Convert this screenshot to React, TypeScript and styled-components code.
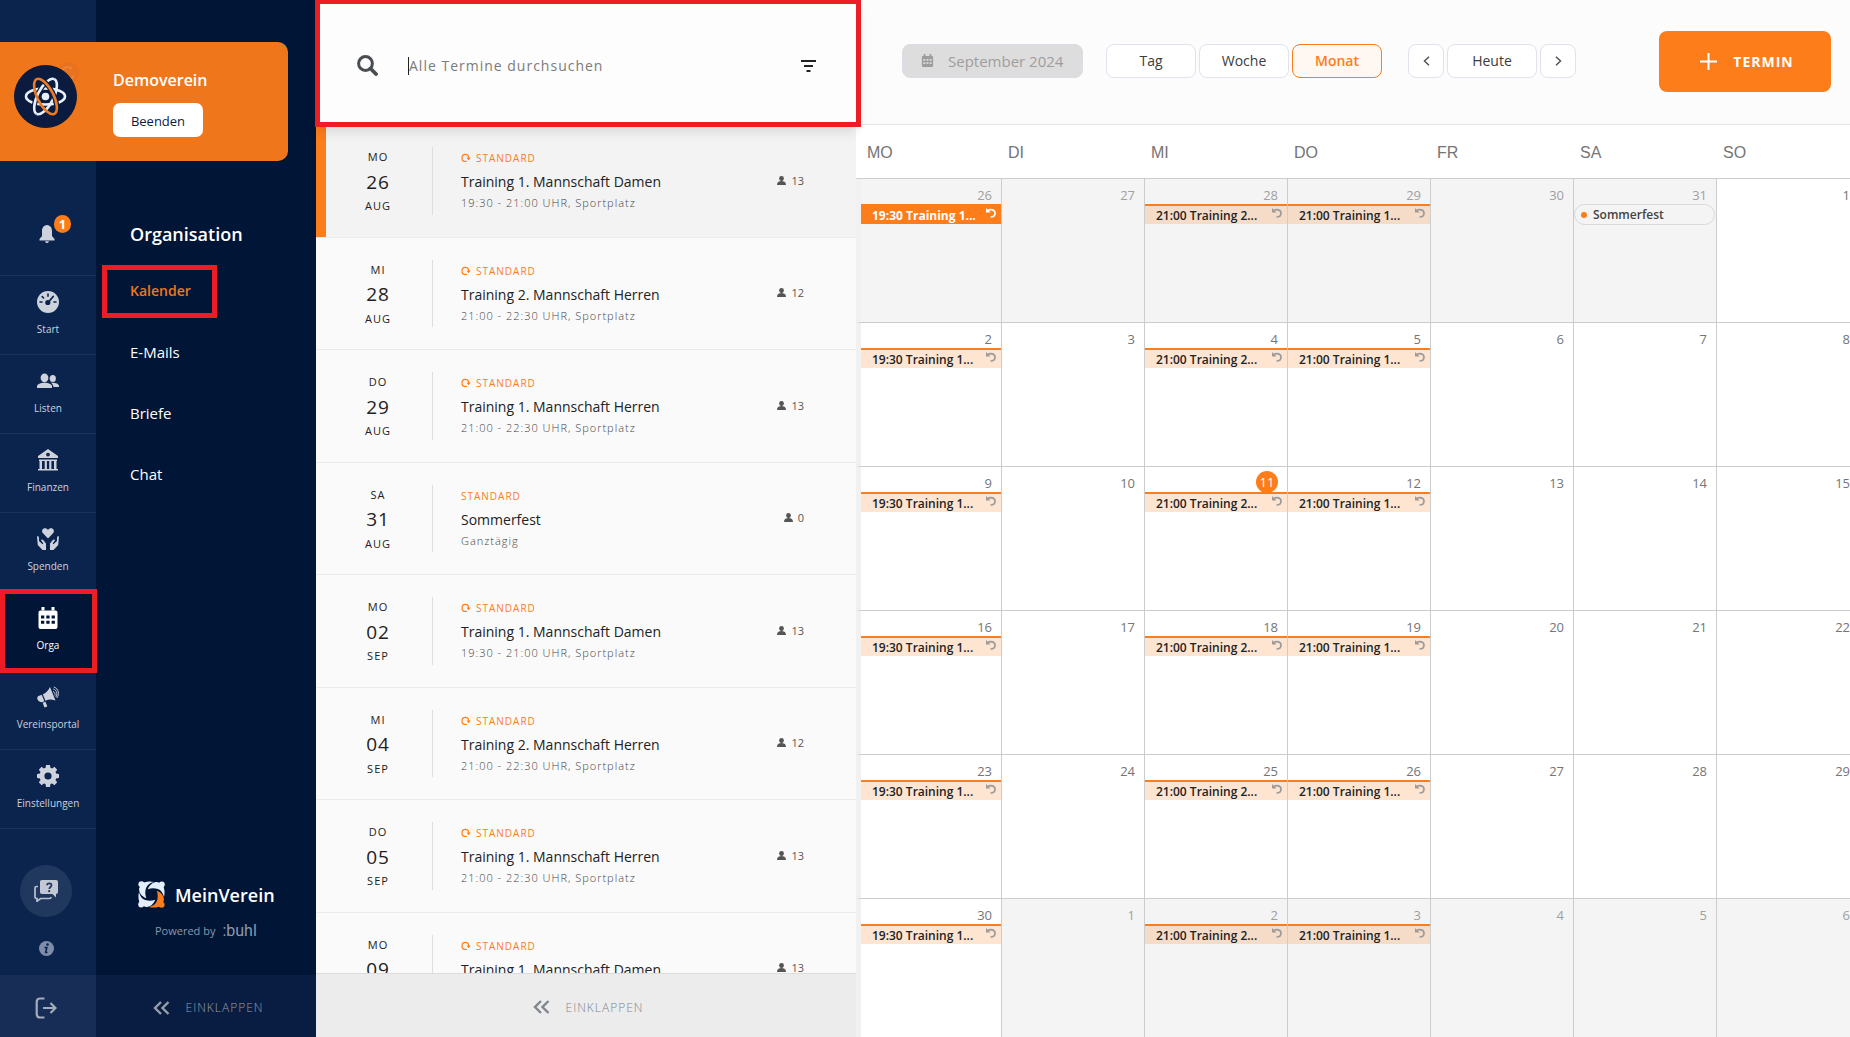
import React, { useState } from "react";
import styled, { createGlobalStyle, css } from "styled-components";

const color = {
  rail: "#0b244e",
  railLine: "#1a3259",
  nav: "#011536",
  orange: "#fc7d1a",
  banner: "#f0761c",
  red: "#ee1c25",
  line: "#cccccc",
  icon: "#cdd2dc",
};

const GlobalStyle = createGlobalStyle`
  *, *::before, *::after { box-sizing: border-box; }
  body {
    margin: 0;
    overflow: hidden;
    font-family: "Open Sans", "Noto Sans", sans-serif;
    color: #222;
    background: #fff;
  }
  button, input { font-family: inherit; }
  button { cursor: pointer; padding: 0; border: 0; background: none; }
  a { text-decoration: none; color: inherit; }
  svg { display: block; flex: none; }
`;

const App = styled.div`
  display: flex;
  height: 100vh;
  overflow: hidden;
`;

const Highlight = styled.span<{ $inset: string }>`
  position: absolute;
  inset: ${(p) => p.$inset};
  border: 5px solid ${color.red};
  pointer-events: none;
  z-index: 5;
`;

/* ---------- sidebar ---------- */

const Sidebar = styled.aside`
  position: relative;
  display: flex;
  flex: none;
`;

const Banner = styled.div`
  position: absolute;
  top: 42px;
  left: 0;
  width: 288px;
  height: 119px;
  display: flex;
  align-items: flex-start;
  gap: 36px;
  padding: 23px 0 0 14px;
  border-radius: 0 10px 10px 0;
  background: ${color.banner};
`;

const BannerText = styled.div`
  display: flex;
  flex-direction: column;
  align-items: flex-start;
  gap: 12px;
  padding-top: 4px;
`;

const ClubName = styled.strong`
  color: #fff;
  font-size: 16px;
  font-weight: 600;
  line-height: 22px;
`;

const EndButton = styled.button`
  width: 90px;
  height: 34px;
  padding-top: 2px;
  border-radius: 7px;
  background: #fff;
  color: #0b1c40;
  font-size: 13px;
`;

const Rail = styled.nav`
  display: flex;
  flex-direction: column;
  width: 96px;
  padding-top: 197px;
  background: ${color.rail};
`;

const Bell = styled.button`
  display: flex;
  flex: none;
  justify-content: center;
  height: 79px;
  padding-top: 28px;
  border-bottom: 1px solid ${color.railLine};
  color: ${color.icon};
`;

const BellIcon = styled.span`
  position: relative;
  height: 18px;
  padding-right: 2px;
`;

const Badge = styled.span`
  position: absolute;
  top: -10px;
  left: 15px;
  width: 17px;
  height: 18px;
  border-radius: 9px;
  background: ${color.orange};
  color: #fff;
  font-size: 13px;
  font-weight: 700;
  line-height: 18px;
  text-align: center;
`;

const RailItem = styled.a<{ $active?: boolean }>`
  position: relative;
  display: flex;
  flex: none;
  flex-direction: column;
  align-items: center;
  gap: 8px;
  height: 79px;
  padding-top: 15px;
  border-bottom: 1px solid ${color.railLine};
  color: ${color.icon};
  font-size: 10px;
  line-height: 16px;
  ${(p) =>
    p.$active &&
    css`
      background: ${color.nav};
      color: #fff;
    `}
`;

const RailFooter = styled.div`
  display: flex;
  flex-direction: column;
  align-items: center;
  gap: 24px;
  margin-top: auto;
  padding: 0 4px 19px 0;
`;

const HelpButton = styled.button`
  display: grid;
  place-items: center;
  width: 52px;
  height: 52px;
  border-radius: 50%;
  background: #20375e;
`;

const LogoutButton = styled.button`
  display: grid;
  place-items: center;
  height: 62px;
  padding: 4px 4px 0 0;
  background: #172d56;
  color: #a3acbc;
`;

const SubNav = styled.nav`
  display: flex;
  flex-direction: column;
  width: 220px;
  padding-top: 222px;
  background: ${color.nav};
`;

const NavHeading = styled.h2`
  margin: 0 0 15px;
  padding-left: 34px;
  color: #fff;
  font-size: 18px;
  font-weight: 600;
  line-height: 24px;
`;

const NavLink = styled.a<{ $active?: boolean }>`
  position: relative;
  display: flex;
  align-items: center;
  height: 61px;
  padding: 0 0 2px 34px;
  color: ${(p) => (p.$active ? color.banner : "#fff")};
  font-size: ${(p) => (p.$active ? 14 : 15)}px;
  font-weight: ${(p) => (p.$active ? 600 : 400)};
`;

const Brand = styled.div`
  display: flex;
  flex-direction: column;
  gap: 12px;
  margin-top: auto;
  padding: 0 0 33px 42px;
`;

const BrandName = styled.div`
  display: flex;
  align-items: center;
  gap: 10px;
  color: #fff;
  font-size: 18px;
  font-weight: 600;
  line-height: 26px;
`;

const PoweredBy = styled.div`
  display: flex;
  align-items: center;
  gap: 7px;
  padding-left: 17px;
  color: #8c98ac;
  font-size: 11px;
  line-height: 22px;
`;

const Buhl = styled.span`
  font-family: Roboto, sans-serif;
  font-size: 16px;
`;

const CollapseButton = styled.button<{ $light?: boolean }>`
  display: flex;
  flex: none;
  align-items: center;
  justify-content: center;
  gap: 16px;
  width: 100%;
  height: ${(p) => (p.$light ? 64 : 62)}px;
  padding: 3px 0 0 4px;
  border-top: ${(p) => (p.$light ? "1px solid #dcdcdc" : "0")};
  background: ${(p) => (p.$light ? "#ececec" : "#091d43")};
  color: ${(p) => (p.$light ? "#80868f" : "#989ea7")};
  font-size: 12px;
  font-weight: 300;
  letter-spacing: 1px;
`;

/* ---------- list of dates ---------- */

const ListPanel = styled.section`
  position: relative;
  z-index: 2;
  display: flex;
  flex: none;
  flex-direction: column;
  width: 540px;
  background: #fafafa;
`;

const SearchBar = styled.form`
  position: relative;
  z-index: 2;
  display: flex;
  flex: none;
  align-items: center;
  height: 125px;
  padding: 6px 40px 0 41px;
  background: #fdfdfd;
  box-shadow: 0 6px 12px rgba(0, 0, 0, 0.12);
  color: #4a4d52;
`;

const SearchInput = styled.input`
  flex: 1;
  min-width: 0;
  height: 18px;
  margin-left: 30px;
  padding: 0;
  border: 0;
  border-left: 1px solid #222;
  outline: 0;
  background: transparent;
  color: #222;
  font-size: 14px;
  letter-spacing: 1px;
  &::placeholder {
    color: #7b7b7b;
    opacity: 1;
  }
`;

const FilterButton = styled.button`
  color: #222;
`;

const List = styled.ul`
  flex: 1;
  min-height: 0;
  margin: 0;
  padding: 0;
  overflow: hidden;
  list-style: none;
`;

const ListRow = styled.li<{ $selected?: boolean }>`
  display: flex;
  padding: 22px 52px 22px 10px;
  border-bottom: 1px solid #ebebeb;
  ${(p) =>
    p.$selected &&
    css`
      background: #f3f3f3;
      box-shadow: inset 10px 0 ${color.orange};
    `}
`;

const DateBlock = styled.time`
  display: flex;
  flex: none;
  flex-direction: column;
  align-items: center;
  width: 107px;
  padding: 2px 2px 0 0;
  border-right: 1px solid #dedede;
  font-size: 11px;
  line-height: 1.5;
  letter-spacing: 1px;
`;

const DayNumber = styled.span`
  margin: 2px 0;
  font-size: 19px;
`;

const RowBody = styled.div`
  flex: 1;
  padding-left: 28px;
`;

const Category = styled.div`
  display: flex;
  align-items: center;
  gap: 5px;
  padding-top: 3px;
  color: ${color.orange};
  font-size: 10px;
  line-height: 16px;
  letter-spacing: 1px;
`;

const RowTitle = styled.div`
  margin-top: 4px;
  font-size: 14px;
  line-height: 24px;
`;

const RowTime = styled.div`
  color: #444;
  font-size: 11px;
  font-weight: 300;
  line-height: 18px;
  letter-spacing: 1px;
`;

const People = styled.div`
  display: flex;
  align-items: center;
  gap: 5px;
  height: 18px;
  margin-top: 24px;
  color: #555;
  font-size: 11px;
`;

/* ---------- calendar ---------- */

const Main = styled.main`
  flex: 1;
  min-width: 0;
  overflow: hidden;
`;

const Toolbar = styled.header`
  display: flex;
  align-items: center;
  height: 125px;
  padding: 0 19px 2px 46px;
  border-bottom: 1px solid #e4e4e4;
  background: #fcfcfc;
`;

const ButtonGroup = styled.div`
  display: flex;
  gap: 3px;
  margin-left: 23px;
  & + & {
    margin-left: 26px;
  }
`;

const ToolButton = styled.button<{ $active?: boolean; $narrow?: boolean }>`
  display: grid;
  place-items: center;
  width: ${(p) => (p.$narrow ? 36 : 90)}px;
  height: 34px;
  padding-bottom: 1px;
  border: 1px solid ${(p) => (p.$active ? color.orange : "#e2e2ee")};
  border-radius: 8px;
  background: ${(p) => (p.$active ? "#fff7f1" : "#fff")};
  color: ${(p) => (p.$active ? color.orange : "#3c3c3c")};
  font-size: 14px;
  font-weight: ${(p) => (p.$active ? 600 : 400)};
`;

const MonthButton = styled.button`
  display: flex;
  align-items: center;
  gap: 14px;
  width: 181px;
  height: 34px;
  padding: 0 0 1px 18px;
  border: 1px solid #dcdde6;
  border-radius: 8px;
  background: #dddddd;
  color: #9d9d9d;
  font-size: 15px;
  white-space: nowrap;
`;

const NewButton = styled.button`
  display: flex;
  align-items: center;
  justify-content: center;
  gap: 16px;
  width: 172px;
  height: 61px;
  margin-left: auto;
  padding-left: 4px;
  border-radius: 8px;
  background: ${color.orange};
  color: #fff;
  font-size: 14px;
  font-weight: 700;
  letter-spacing: 1px;
`;

const Calendar = styled.table`
  width: calc(100% + 10px);
  table-layout: fixed;
  border-collapse: separate;
  border-spacing: 0;
`;

const Weekday = styled.th`
  height: 54px;
  padding: 2px 0 0 6px;
  border-bottom: 1px solid ${color.line};
  color: #757575;
  font-family: "Liberation Sans", Arial, sans-serif;
  font-size: 16px;
  font-weight: 400;
  text-align: left;
  &:first-child {
    width: 146px;
    padding-left: 11px;
  }
`;

const Day = styled.td<{ $outside?: boolean }>`
  height: 144px;
  padding: 0;
  border-right: 1px solid ${color.line};
  border-bottom: 1px solid ${color.line};
  background: ${(p) => (p.$outside ? "#f4f4f4" : "#fff")};
  color: ${(p) => (p.$outside ? "#a0a0a0" : "#757575")};
  vertical-align: top;
  &:first-child {
    border-left: 5px solid #f1f1f1;
  }
`;

const DayHead = styled.div`
  display: flex;
  justify-content: flex-end;
  height: 25px;
  padding: 4px 9px 0 0;
  font-size: 13px;
  line-height: 24px;
`;

const Today = styled.span`
  width: 22px;
  height: 22px;
  border-radius: 50%;
  background: ${color.orange};
  color: #fff;
  line-height: 23px;
  text-align: center;
`;

const Event = styled.button<{ $selected?: boolean }>`
  display: flex;
  align-items: flex-start;
  justify-content: space-between;
  width: 100%;
  height: 20px;
  padding: 1px 5px 0 11px;
  border-top: 2px solid ${color.orange};
  background: ${(p) => (p.$selected ? color.orange : "rgba(250, 125, 30, 0.2)")};
  color: ${(p) => (p.$selected ? "#fff" : "#222")};
  font-size: 12px;
  font-weight: ${(p) => (p.$selected ? 700 : 600)};
  line-height: 17px;
  white-space: nowrap;
  svg {
    margin-top: 1px;
    color: ${(p) => (p.$selected ? "#fff" : "#9b9b9b")};
  }
`;

const AllDay = styled.button`
  display: flex;
  align-items: center;
  gap: 6px;
  width: calc(100% - 1px);
  height: 21px;
  padding-left: 6px;
  border: 1px solid #d8d8d8;
  border-radius: 11px;
  color: #444;
  font-size: 12px;
  font-weight: 600;
`;

const Dot = styled.span`
  width: 6px;
  height: 6px;
  border-radius: 50%;
  background: ${color.orange};
`;

/* ---------- icons ---------- */

const AtomLogo = () => (
  <svg width="63" height="63" viewBox="0 0 63 63" fill="none" strokeWidth="2.6" overflow="visible">
    <circle cx="54" cy="8" r="11" fill="#e8721d" />
    <path d="M48 6a6 6 0 0110-2M60 10a6 6 0 01-10 2" stroke="#ee8238" strokeWidth="2" />
    <circle cx="31.5" cy="31.5" r="31" fill="#0b1b3f" stroke="#111a2c" strokeWidth="1" />
    <ellipse cx="31.5" cy="31.5" rx="19.8" ry="8" stroke="#0b1b3f" strokeWidth="5" />
    <ellipse cx="31.5" cy="31.5" rx="19.5" ry="8" stroke="#e6f0fc" transform="rotate(117 31.5 31.5)" />
    <path d="M12 31.500c0-4.500 8.500-8 19.500-8s19.500 3.500 19.500 8-8.500 8-19.500 8-19.500-3.500-19.500-8z" stroke="#e6f0fc" />
    <path d="M40.300 14.100A19.500 8 117 0 0 22.700 48.900" stroke="#0b1b3f" strokeWidth="5" />
    <path d="M40.300 14.100A19.500 8 117 0 0 22.700 48.900" stroke="#e6f0fc" />
    <g transform="rotate(63 31.5 31.5)">
      <path d="M12 31.500a19.500 8 0 0 1 39 0" stroke="#0b1b3f" strokeWidth="5" />
      <ellipse cx="31.500" cy="31.500" rx="19.500" ry="8" stroke="#ee7a22" />
    </g>
    <circle cx="31.500" cy="31.500" r="3.800" fill="#e6f0fc" />
  </svg>
);

const BellGlyph = () => (
  <svg width="16" height="18" viewBox="0 0 16 18" fill="currentColor">
    <path d="M8 0C4.500.500 3 3 3 6v5L.500 14v1.500h15V14L13 11V6C13 3 11.500.500 8 0zM6 16.200h4C9.700 17.400 9 18 8 18s-1.700-.600-2-1.800z" />
  </svg>
);

const GaugeGlyph = () => (
  <svg width="22" height="22" viewBox="0 0 22 22">
    <circle cx="11" cy="11" r="11" fill="currentColor" />
    <g stroke={color.rail} strokeWidth="1.600" strokeLinecap="round">
      <path d="M11 3v2.200M5.200 5.600l1.400 1.400M3 11h2M17 11h2" />
      <path d="M11 11.500l5.200-6" strokeWidth="1.800" />
    </g>
    <circle cx="10.800" cy="11.500" r="2.600" fill={color.rail} />
  </svg>
);

const PeopleGlyph = () => (
  <svg width="22" height="22" viewBox="0 0 22 22" fill="currentColor">
    <ellipse cx="7.500" cy="7.800" rx="3.900" ry="4.400" />
    <path d="M0 18v-1.500c0-2.500 4-3.700 7.500-3.700s7.500 1.200 7.500 3.700V18z" />
    <ellipse cx="15.800" cy="8.600" rx="3.100" ry="3.500" />
    <path d="M13.800 12.800c3.600-.500 8.200.700 8.200 3.200v1h-5.500c-.200-1.800-1.200-3.200-2.700-4.200z" />
  </svg>
);

const BankGlyph = () => (
  <svg width="22" height="22" viewBox="0 0 22 22" fill="currentColor">
    <path fillRule="evenodd" d="M11 0l10 7v2H1V7zm0 3.700a1.900 1.900 0 100 3.800 1.900 1.900 0 000-3.800z" />
    <path d="M2 10.500h18V12H2zM2.500 12H5v8H2.500zM7.700 12h2.200v8H7.700zM12.200 12h2.200v8h-2.200zM17 12h2.500v8H17zM1 20h20v1.500H1z" />
  </svg>
);

const DonateGlyph = () => (
  <svg width="22" height="22" viewBox="0 0 22 22" fill="currentColor">
    <path d="M11 10.500L6 5.300C4 3 5.500.200 8 .200c1.300 0 2.300.600 3 1.700.700-1.100 1.700-1.700 3-1.700 2.500 0 4 2.800 2 5.100z" />
    <path d="M0 8.500c1-.500 2 0 2 1.500v3l3.500 3.300.8-.8-2.400-3.400c1-1 2-.5 2.700.4L9 15.500V22H5.500L.800 17z" />
    <path d="M22 8.500c-1-.500-2 0-2 1.500v3l-3.500 3.300-.8-.8 2.400-3.400c-1-1-2-.5-2.700.4L13 15.500V22h3.500l4.700-5z" />
  </svg>
);

const CalendarGlyph = ({ size = 22 }: { size?: number }) => (
  <svg width={size} height={size} viewBox="0 0 22 22" fill="currentColor">
    <path d="M4.500 0h3v3.500h-3zM14.500 0h3v3.500h-3z" />
    <path
      fillRule="evenodd"
      d="M3.500 3.500h15c1.200 0 2 .7 2 2v14.500c0 1.200-.8 2-2 2h-15c-1.200 0-2-.8-2-2V5.500c0-1.300.8-2 2-2zM4 8.500v3h3.300v-3zm5.300 0v3h3.300v-3zm5.300 0v3h3.300v-3zM4 13.800v3h3.300v-3zm5.300 0v3h3.300v-3zm5.300 0v3h3.300v-3z"
    />
  </svg>
);

const MegaphoneGlyph = () => (
  <svg width="22" height="22" viewBox="0 0 22 22" fill="currentColor">
    <path d="M13 1l5.500 13.500c-4-1.300-7-1.200-10 .200L5.800 8.300C9 7 11.300 4.800 13 1zM4.700 8.800l2.700 6.400-2.700 1C1 16-.700 12.500.700 10.700c.800-.900 2.300-1.200 4-1.900zM5.700 16.700l2.700-1 1.900 4.500c-.8.800-1.900 1.200-3 1z" />
    <path d="M16 5.500c2 .8 2.500 2.500 1.900 4M16.300 3c3.500 1 4.300 5 2.500 8M16.800 1c5 1.500 5.800 7.500 3 11" fill="none" stroke="currentColor" strokeWidth="1" />
  </svg>
);

const GearGlyph = () => (
  <svg width="22" height="22" viewBox="0 0 22 22" fill="currentColor">
    {[0, 45, 90, 135].map((a) => (
      <path key={a} d="M8.500 3.500L9 0h4l.5 3.500v15L13 22H9l-.5-3.500z" transform={`rotate(${a} 11 11)`} />
    ))}
    <circle cx="11" cy="11" r="8.500" />
    <circle cx="11" cy="11" r="3.600" fill={color.rail} />
  </svg>
);

const HelpGlyph = () => (
  <svg width="24" height="22" viewBox="0 0 24 22">
    <path d="M4 6.500H2.500c-1 0-1.500.6-1.500 1.500v9c0 1 .5 1.500 1.500 1.500H3v2.800l3.500-2.800h9c1 0 1.500-.5 1.500-1.500" fill="none" stroke="#b9c1ce" strokeWidth="1.700" />
    <path d="M8 0h14c1.300 0 2 .7 2 2v10c0 1.300-.7 2-2 2v3.500L18.500 14H8c-1.300 0-2-.7-2-2V2c0-1.300.7-2 2-2z" fill="#c2c8d4" />
    <path d="M13 5.300c0-2.700 4.500-2.700 4.500 0 0 1.700-2.200 1.700-2.200 3.700" fill="none" stroke="#20375e" strokeWidth="1.700" />
    <circle cx="15.200" cy="11.200" r="1.100" fill="#20375e" />
  </svg>
);

const InfoGlyph = () => (
  <svg width="15" height="15" viewBox="0 0 15 15">
    <circle cx="7.500" cy="7.500" r="7.500" fill="#7e8da8" />
    <circle cx="8.500" cy="3.500" r="1.300" fill={color.rail} />
    <path d="M5.500 6.500h2.300L6.700 11.500h1.800" fill="none" stroke={color.rail} strokeWidth="1.600" />
  </svg>
);

const LogoutGlyph = () => (
  <svg width="22" height="22" viewBox="0 0 22 22" fill="none" stroke="currentColor" strokeWidth="2.200">
    <path d="M9.500 1.500H5C3 1.500 1.700 2.700 1.700 5v12c0 2.300 1.300 3.500 3.300 3.500h4.500M8 11h12M15.500 6l5 5-5 5" />
  </svg>
);

const DoubleChevron = () => (
  <svg width="17" height="14" viewBox="0 0 17 14" fill="none" stroke="currentColor" strokeWidth="2.400">
    <path d="M8 1L2 7l6 6M15.500 1l-6 6 6 6" />
  </svg>
);

const BrandGlyph = () => (
  <svg width="27" height="27" viewBox="0 0 26 26">
    {[90, 180, 270, 0].map((a) => (
      <g key={a} transform={`rotate(${a} 13 13)`} fill={a === 0 ? color.orange : "#e4effd"}>
        <path d="M18 9.500C22.500 11 25 14.500 25 18.500l-2 4.500c-3 2.500-8 3.200-12.500 2 4-.8 6.800-2.800 7.800-6 1-3.200.9-6.500-.3-9.500z" />
        <circle cx="22.700" cy="22.900" r="2.900" />
      </g>
    ))}
  </svg>
);

const SearchGlyph = () => (
  <svg width="21" height="21" viewBox="0 0 21 21" fill="none" stroke="currentColor" role="img" aria-label="Suche">
    <circle cx="8.500" cy="8.500" r="6.900" strokeWidth="3" />
    <path d="M13.500 13.500l5.500 5.500" strokeWidth="3.800" strokeLinecap="round" />
  </svg>
);

const FilterGlyph = () => (
  <svg width="15" height="14" viewBox="0 0 15 14" stroke="currentColor" strokeWidth="2">
    <path d="M0 2h15M3 7h9M5.500 12h4" />
  </svg>
);

const RepeatGlyph = () => (
  <svg width="10" height="10" viewBox="0 0 10 10">
    <path d="M5.800 8.300H3.700C2 8.300 1 7 1 5 1 2.800 2.200 1.300 4.300 1.300c2 0 3.300 1.200 3.300 3.400" fill="none" stroke="currentColor" strokeWidth="1.200" />
    <path d="M5.500 4.500h4.300L7.600 7.200z" fill="currentColor" />
  </svg>
);

const UndoGlyph = () => (
  <svg width="10" height="10" viewBox="0 0 10 10">
    <path d="M2 2.300C4 1.300 9 1.200 9 5.200c0 2.500-2 3.800-4.500 3.800" fill="none" stroke="currentColor" strokeWidth="1.700" />
    <path d="M0 0v4.600h4.600z" fill="currentColor" />
  </svg>
);

const PersonGlyph = () => (
  <svg width="9" height="9" viewBox="0 0 9 9" fill="currentColor">
    <circle cx="4.500" cy="2.400" r="2.400" />
    <path d="M3.500 4h2v1.200C7.800 5.500 9 6.500 9 9H0c0-2.500 1.200-3.500 3.500-3.800z" />
  </svg>
);

const Chevron = ({ right }: { right?: boolean }) => (
  <svg width="7" height="10" viewBox="0 0 7 10" fill="none" stroke="#555" strokeWidth="1.500">
    <path d={right ? "M1 .8L5.500 5 1 9.200" : "M6 .8L1.500 5 6 9.200"} />
  </svg>
);

const PlusGlyph = () => (
  <svg width="17" height="17" viewBox="0 0 17 17" stroke="#fff" strokeWidth="2">
    <path d="M8.500 0v17M0 8.500h17" />
  </svg>
);

/* ---------- data ---------- */

const railItems = [
  { label: "Start", Icon: GaugeGlyph },
  { label: "Listen", Icon: PeopleGlyph },
  { label: "Finanzen", Icon: BankGlyph },
  { label: "Spenden", Icon: DonateGlyph },
  { label: "Orga", Icon: CalendarGlyph, active: true },
  { label: "Vereinsportal", Icon: MegaphoneGlyph },
  { label: "Einstellungen", Icon: GearGlyph },
];

const navLinks = ["Kalender", "E-Mails", "Briefe", "Chat"];

type Kind = "damen" | "herren1" | "herren2" | "fest";

const kinds: Record<Kind, { title: string; time: string; people: number }> = {
  damen: { title: "Training 1. Mannschaft Damen", time: "19:30 - 21:00 UHR, Sportplatz", people: 13 },
  herren1: { title: "Training 1. Mannschaft Herren", time: "21:00 - 22:30 UHR, Sportplatz", people: 13 },
  herren2: { title: "Training 2. Mannschaft Herren", time: "21:00 - 22:30 UHR, Sportplatz", people: 12 },
  fest: { title: "Sommerfest", time: "Ganztägig", people: 0 },
};

const rows: [string, string, string, Kind][] = [
  ["MO", "26", "AUG", "damen"],
  ["MI", "28", "AUG", "herren2"],
  ["DO", "29", "AUG", "herren1"],
  ["SA", "31", "AUG", "fest"],
  ["MO", "02", "SEP", "damen"],
  ["MI", "04", "SEP", "herren2"],
  ["DO", "05", "SEP", "herren1"],
  ["MO", "09", "SEP", "damen"],
];

const weekdays = ["MO", "DI", "MI", "DO", "FR", "SA", "SO"];

const weeklyEvents: Record<number, string> = {
  0: "19:30 Training 1...",
  2: "21:00 Training 2...",
  3: "21:00 Training 1...",
};

const weeks = Array.from({ length: 6 }, (_, w) =>
  Array.from({ length: 7 }, (_, d) => {
    const n = w * 7 + d - 5;
    return { day: n < 1 ? n + 31 : n > 30 ? n - 30 : n, outside: n < 1 || n > 30, today: n === 11 };
  })
);

export default function MeinVerein() {
  const [query, setQuery] = useState("");
  return (
    <App>
      <GlobalStyle />
      <Sidebar>
        <Rail aria-label="Hauptmenü">
          <Bell aria-label="Benachrichtigungen">
            <BellIcon>
              <BellGlyph />
              <Badge>1</Badge>
            </BellIcon>
          </Bell>
          {railItems.map(({ label, Icon, active }) => (
            <RailItem key={label} href="#" $active={active}>
              <Icon />
              {label}
              {active && <Highlight $inset="-3px -1px -3px 0" />}
            </RailItem>
          ))}
          <RailFooter>
            <HelpButton aria-label="Hilfe">
              <HelpGlyph />
            </HelpButton>
            <button aria-label="Info">
              <InfoGlyph />
            </button>
          </RailFooter>
          <LogoutButton aria-label="Abmelden">
            <LogoutGlyph />
          </LogoutButton>
        </Rail>
        <SubNav aria-label="Organisation">
          <NavHeading>Organisation</NavHeading>
          {navLinks.map((label, i) => (
            <NavLink key={label} href="#" $active={i === 0}>
              {label}
              {i === 0 && <Highlight $inset="4px 99px 4px 6px" />}
            </NavLink>
          ))}
          <Brand>
            <BrandName>
              <BrandGlyph />
              MeinVerein
            </BrandName>
            <PoweredBy>
              Powered by <Buhl>:buhl</Buhl>
            </PoweredBy>
          </Brand>
          <CollapseButton>
            <DoubleChevron />
            EINKLAPPEN
          </CollapseButton>
        </SubNav>
        <Banner>
          <AtomLogo />
          <BannerText>
            <ClubName>Demoverein</ClubName>
            <EndButton>Beenden</EndButton>
          </BannerText>
        </Banner>
      </Sidebar>

      <ListPanel>
        <SearchBar onSubmit={(e) => e.preventDefault()}>
          <label htmlFor="search">
            <SearchGlyph />
          </label>
          <SearchInput
            id="search"
            placeholder="Alle Termine durchsuchen"
            value={query}
            onChange={(e) => setQuery(e.target.value)}
          />
          <FilterButton type="button" aria-label="Filter">
            <FilterGlyph />
          </FilterButton>
          <Highlight $inset="-1px -5px -2px -1px" />
        </SearchBar>
        <List>
          {rows.map(([weekday, day, month, kind], i) => (
            <ListRow key={month + day} $selected={i === 0}>
              <DateBlock>
                {weekday}
                <DayNumber>{day}</DayNumber>
                {month}
              </DateBlock>
              <RowBody>
                <Category>
                  {kind !== "fest" && <RepeatGlyph />}
                  STANDARD
                </Category>
                <RowTitle>{kinds[kind].title}</RowTitle>
                <RowTime>{kinds[kind].time}</RowTime>
              </RowBody>
              <People>
                <PersonGlyph />
                {kinds[kind].people}
              </People>
            </ListRow>
          ))}
        </List>
        <CollapseButton $light>
          <DoubleChevron />
          EINKLAPPEN
        </CollapseButton>
      </ListPanel>

      <Main>
        <Toolbar>
          <MonthButton disabled>
            <CalendarGlyph size={13} />
            September 2024
          </MonthButton>
          <ButtonGroup>
            <ToolButton>Tag</ToolButton>
            <ToolButton>Woche</ToolButton>
            <ToolButton $active>Monat</ToolButton>
          </ButtonGroup>
          <ButtonGroup>
            <ToolButton $narrow aria-label="Zurück">
              <Chevron />
            </ToolButton>
            <ToolButton>Heute</ToolButton>
            <ToolButton $narrow aria-label="Weiter">
              <Chevron right />
            </ToolButton>
          </ButtonGroup>
          <NewButton>
            <PlusGlyph />
            TERMIN
          </NewButton>
        </Toolbar>
        <Calendar>
          <thead>
            <tr>
              {weekdays.map((d) => (
                <Weekday key={d} scope="col">
                  {d}
                </Weekday>
              ))}
            </tr>
          </thead>
          <tbody>
            {weeks.map((week, w) => (
              <tr key={w}>
                {week.map(({ day, outside, today }, d) => (
                  <Day key={d} $outside={outside}>
                    <DayHead>{today ? <Today>{day}</Today> : day}</DayHead>
                    {weeklyEvents[d] && (
                      <Event $selected={w === 0 && d === 0}>
                        {weeklyEvents[d]}
                        <UndoGlyph />
                      </Event>
                    )}
                    {w === 0 && d === 5 && (
                      <AllDay>
                        <Dot />
                        Sommerfest
                      </AllDay>
                    )}
                  </Day>
                ))}
              </tr>
            ))}
          </tbody>
        </Calendar>
      </Main>
    </App>
  );
}
